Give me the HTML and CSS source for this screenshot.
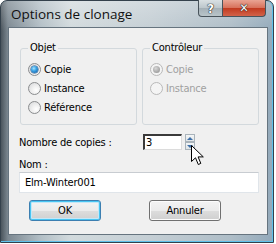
FILE: index.html
```html
<!DOCTYPE html>
<html>
<head>
    <meta charset="UTF-8"/>
    <title>Options de clonage</title>
    <link rel="stylesheet" href="styles.css">
</head>
<body>
<div class="window">
    <div class="titlebar">
        <span class="title">Options de clonage</span>
        <div class="caption-btns">
            <span class="cap-btn help">?</span>
            <span class="cap-btn close">✕</span>
        </div>
    </div>

    <div class="client">
        <div class="groups">
            <fieldset class="group">
                <legend>Objet</legend>
                <div class="radio-row"><span class="radio checked"></span>Copie</div>
                <div class="radio-row"><span class="radio"></span>Instance</div>
                <div class="radio-row"><span class="radio"></span>Référence</div>
            </fieldset>
            <fieldset class="group disabled">
                <legend>Contrôleur</legend>
                <div class="radio-row"><span class="radio checked"></span>Copie</div>
                <div class="radio-row"><span class="radio"></span>Instance</div>
            </fieldset>
        </div>

        <div class="count-row">
            <span class="count-label">Nombre de copies :</span>
            <span class="spin-input">3</span>
            <span class="spin-btns">
                <span class="spin-up"></span>
                <span class="spin-down"></span>
            </span>
        </div>

        <div class="name-label">Nom :</div>
        <div class="name-input">Elm-Winter001</div>

        <div class="buttons">
            <span class="btn default">OK</span>
            <span class="btn">Annuler</span>
        </div>
    </div>

    <!-- pointeur de la souris au-dessus du spinner -->
    <svg class="cursor" width="13" height="21" viewBox="0 0 13 21">
        <path d="M0.5 0.5 L0.5 16.5 L4.5 12.8 L7.3 19.5 L9.8 18.4 L7.1 11.9 L12.3 11.9 Z"
              fill="#fff" stroke="#000" stroke-width="1" stroke-linejoin="round"/>
    </svg>
</div>
</body>
</html>
```

FILE: styles.css
```css
body {
    margin: 0;
    background: #fff;
    font-family: "DejaVu Sans Condensed", "DejaVu Sans", sans-serif;
    font-stretch: condensed;
    font-size: 11px;
    letter-spacing: -0.2px;
    color: #000;
}

.window {
    position: relative;
    width: 274px;
    height: 243px;
    box-sizing: border-box;
    display: flex;
    flex-direction: column;
    border: 1px solid #34414c;
    border-radius: 7px 7px 0 0;
    background:
        linear-gradient(180deg, rgba(255, 255, 255, 0.25) 0, rgba(255, 255, 255, 0) 30px),
        linear-gradient(90deg, #4b555d 0, #7c8891 7px, #b3bfc6 40px, #d2dadd 70px, #c4ced4 150px, #aebdc7 230px, #93a9ba 100%);
    box-shadow: inset 0 -1px 0 #5fc0ea, inset -1px 0 0 #5fc0ea;
}

.titlebar {
    height: 26px;
    display: flex;
    justify-content: space-between;
    align-items: flex-start;
}

.title {
    font-family: "Open Sans", "Noto Sans", sans-serif;
    font-stretch: normal;
    font-size: 13.5px;
    letter-spacing: 0;
    color: #111;
    margin: 4px 0 0 10px;
}

.caption-btns {
    display: flex;
    margin-right: 7px;
    margin-top: -1px;
}

.cap-btn {
    height: 17px;
    box-sizing: border-box;
    border: 1px solid #48535b;
    border-top: none;
    display: flex;
    align-items: center;
    justify-content: center;
    font-family: "DejaVu Sans", sans-serif;
    font-weight: bold;
    color: #fff;
    text-shadow: 0 0 1px #222, 0 0 1px #222, 0 0 1px #222;
}

.help {
    width: 25px;
    border-radius: 0 0 0 4px;
    background: linear-gradient(180deg, #d9e0e3 0, #bcc6cb 50%, #a4b0b7 51%, #b9c4c9 100%);
    font-size: 13px;
}

.close {
    width: 43px;
    border-left: none;
    border-radius: 0 0 4px 0;
    background: linear-gradient(180deg, #e9a493 0, #d7705a 50%, #c1391f 51%, #d2634a 100%);
    font-size: 12px;
}

.client {
    flex: 1;
    margin: 0 5px 7px 7px;
    background: #f0f0f0;
    border: 1px solid #66747f;
    padding-top: 13px;
}

.groups {
    display: flex;
    gap: 5px;
    margin-left: 11px;
}

.group {
    margin: 0;
    height: 84px;
    box-sizing: border-box;
    border: 1px solid #d3d9dd;
    border-radius: 3px;
    padding: 5px 0 0 7px;
    width: 117px;
}

.group legend {
    padding: 0 2px;
    line-height: 14px;
}

.radio-row {
    height: 19px;
    display: flex;
    align-items: center;
    gap: 3px;
}

.radio {
    width: 13px;
    height: 13px;
    box-sizing: border-box;
    border-radius: 50%;
    border: 1px solid #8a8c8e;
    background: radial-gradient(circle at 65% 65%, #ffffff 0, #f2f2f2 35%, #d5d6d8 100%);
    display: flex;
    align-items: center;
    justify-content: center;
}

.radio.checked::after {
    content: "";
    width: 7px;
    height: 7px;
    border-radius: 50%;
    background: radial-gradient(circle at 40% 35%, #a8e4ff 0, #3aa2e4 40%, #0c4f98 100%);
    box-shadow: 0 0 0 0.5px #1a4e86;
}

.disabled {
    color: #a0a0a0;
}

.disabled legend {
    color: #000;
}

.disabled .radio {
    border-color: #b9b9b9;
    background: #f4f4f4;
}

.disabled .radio.checked::after {
    background: radial-gradient(circle at 40% 35%, #d8d8d8 0, #a9a9a9 60%, #8c8c8c 100%);
    box-shadow: none;
}

.count-row {
    display: flex;
    align-items: center;
    height: 16px;
    margin: 9px 0 0 10px;
}

.count-label {
    width: 124px;
}

.spin-input {
    width: 39px;
    height: 16px;
    box-sizing: border-box;
    background: #fff;
    border-top: 2px solid #3a3a3a;
    border-left: 2px solid #3a3a3a;
    border-right: 1px solid #dcdcdc;
    border-bottom: 1px solid #dcdcdc;
    padding-left: 1px;
    line-height: 13px;
}

.spin-btns {
    display: flex;
    flex-direction: column;
    margin-left: 3px;
    width: 10px;
    height: 16px;
}

.spin-up,
.spin-down {
    flex: 1;
    box-sizing: border-box;
    border: 1px solid #a9b3ba;
    background: linear-gradient(180deg, #f4f6f7, #dfe4e7);
    display: flex;
    align-items: center;
    justify-content: center;
}

.spin-up::after {
    content: "";
    border: 3px solid transparent;
    border-top: none;
    border-bottom: 3px solid #3d6fa8;
}

.spin-down::after {
    content: "";
    border: 3px solid transparent;
    border-bottom: none;
    border-top: 3px solid #3d6fa8;
}

.name-label {
    margin: 8px 0 0 10px;
    line-height: 14px;
}

.name-input {
    margin: 0 0 0 10px;
    width: 240px;
    height: 21px;
    box-sizing: border-box;
    background: #fff;
    border: 1px solid #e0e5ea;
    border-top-color: #c8ccd1;
    padding-left: 5px;
    line-height: 19px;
}

.buttons {
    display: flex;
    gap: 48px;
    margin: 7px 0 0 20px;
}

.btn {
    width: 72px;
    height: 21px;
    box-sizing: border-box;
    border: 1px solid #707070;
    border-radius: 3px;
    background: linear-gradient(180deg, #f3f3f3 0, #ebebeb 50%, #dddddd 51%, #cfcfcf 100%);
    box-shadow: inset 0 0 0 1px #fcfcfc;
    display: flex;
    align-items: center;
    justify-content: center;
}

.btn.default {
    border-color: #3c7fb1;
    box-shadow: inset 0 0 0 1px #48c5f2, inset 0 0 0 2px #c4e7f7;
}

.cursor {
    position: absolute;
    left: 190px;
    top: 144px;
}
```
